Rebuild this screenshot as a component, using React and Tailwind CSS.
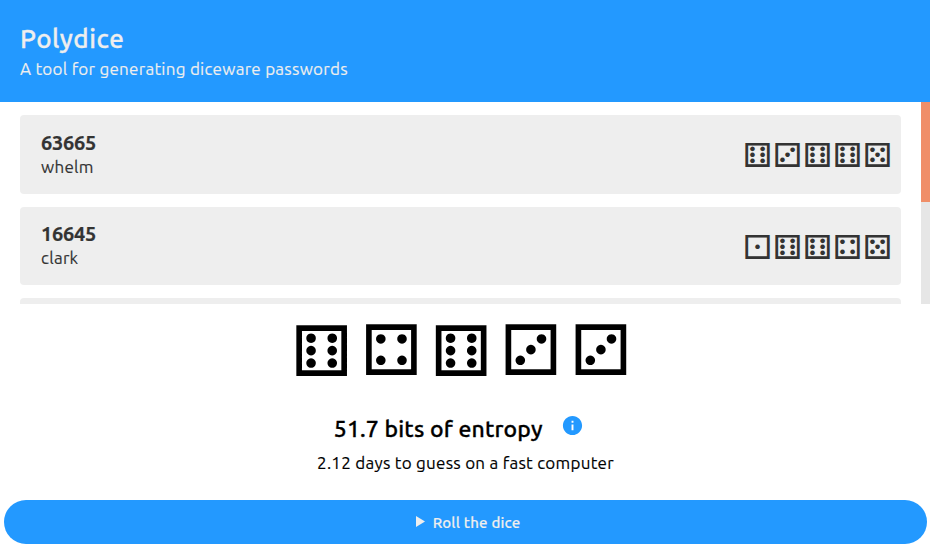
const FACES = ['⚀', '⚁', '⚂', '⚃', '⚄', '⚅'];

const ENTRIES = [
  { rolls: [6, 3, 6, 6, 5], word: 'whelm', height: 'h-[79px]', dice: 'pt-[3px]' },
  { rolls: [1, 6, 6, 4, 5], word: 'clark', height: 'h-[78px]', dice: 'pt-[4px]' },
];

const CURRENT = [6, 4, 6, 3, 3];

function Header() {
  return (
    <header className="h-[102px] shrink-0 bg-[#2399ff] px-5 pt-[23px] text-[#eee]">
      <h1 className="h-8 text-[26px] leading-8 font-medium tracking-[0.55px] [-webkit-text-stroke:0.3px_#eee]">Polydice</h1>
      <p className="mt-[2px] text-[17px] leading-6 tracking-[0.26px] [-webkit-text-stroke:0.15px_#eee]">A tool for generating diceware passwords</p>
    </header>
  );
}

function Entry({ entry }) {
  return (
    <li className={`flex shrink-0 items-center justify-between rounded bg-[#eee] pr-[8.5px] pl-[21px] text-[#333] ${entry.height}`}>
      <div>
        <div className="text-[20px] leading-6 font-bold tracking-[-0.25px] [-webkit-text-stroke:0.2px_#333]">{entry.rolls.join('')}</div>
        <div className="text-[17px] leading-6 tracking-[0.26px] [-webkit-text-stroke:0.15px_#333]">{entry.word}</div>
      </div>
      <div className={`flex font-['DejaVu_Sans'] text-[33.6px] leading-[40px] ${entry.dice}`}>
        {entry.rolls.map((n, i) => (
          <span key={i} className="flex w-[30px] justify-center">{FACES[n - 1]}</span>
        ))}
      </div>
    </li>
  );
}

export default function App() {
  return (
    <div className="flex h-[547px] w-full flex-col overflow-hidden bg-white font-['Ubuntu','Noto_Sans',sans-serif] text-black">
      <Header />
      <main className="flex h-[202px] shrink-0 overflow-hidden">
        <ul className="flex flex-1 flex-col gap-[13px] pt-[13px] pr-5 pl-5">
          {ENTRIES.map((e) => (
            <Entry key={e.word} entry={e} />
          ))}
          <li className="h-[78px] shrink-0 rounded bg-[#eee]" />
        </ul>
        <div className="w-[9px] bg-[#e6e6e6]">
          <div className="h-[100px] bg-[#f08e68]" />
        </div>
      </main>
      <section className="flex flex-1 flex-col items-center">
        <div className="flex h-[92px] items-center pt-[2px] pr-[7.5px] font-['DejaVu_Sans'] text-[70px] leading-[80px]">
          {CURRENT.map((n, i) => (
            <span key={i} className={`flex w-[69.8px] justify-center ${n === 6 ? 'pt-[2px]' : 'pt-0'}`}>{FACES[n - 1]}</span>
          ))}
        </div>
        <div className="mt-[17px] flex h-8 items-center pr-[12px]">
          <h2 className="text-[23px] leading-8 font-medium tracking-[0.15px] [-webkit-text-stroke:0.3px_#000]">51.7 bits of entropy</h2>
          <svg className="mb-2 ml-[18.5px] size-[23px] text-[#2399ff]" viewBox="0 0 24 24" fill="currentColor">
            <path d="M12 2C6.48 2 2 6.48 2 12s4.48 10 10 10 10-4.48 10-10S17.52 2 12 2zm1 15h-2v-6h2v6zm0-8h-2V7h2v2z" />
          </svg>
        </div>
        <p className="mt-[6px] pl-px text-[17px] leading-6 tracking-[0.27px] [-webkit-text-stroke:0.15px_#000]">2.12 days to guess on a fast computer</p>
      </section>
      <button className="mr-[3px] mb-[3px] ml-1 flex h-11 shrink-0 items-center justify-center gap-2 rounded-full bg-[#2399ff] pl-[5px] text-[#eee]">
        <svg className="mb-px h-[11px] w-[9px]" viewBox="0 0 9 11" fill="currentColor">
          <path d="M0 0 9 5.5 0 11Z" />
        </svg>
        <span className="pt-px text-[15px] leading-5 font-medium tracking-[0.2px] [-webkit-text-stroke:0.15px_#eee]">Roll the dice</span>
      </button>
    </div>
  );
}
